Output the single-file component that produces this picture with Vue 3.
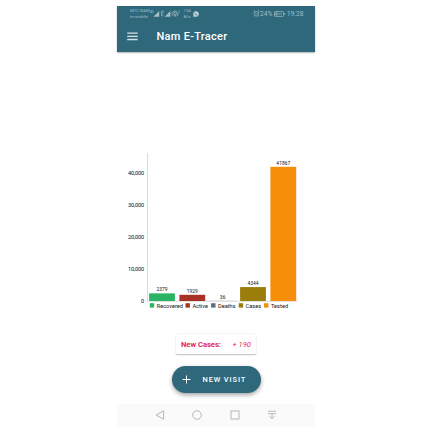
<script setup>
const base = 149
const perUnit = 32.05 / 10000
const ticks = [0, 10000, 20000, 30000, 40000]
const bars = [
  { name: 'Recovered', value: 2379, x: 32.1, color: '#28b463', legend: 32.8 },
  { name: 'Active', value: 1929, x: 62.4, color: '#a93226', legend: 68.5 },
  { name: 'Deaths', value: 36, x: 92.8, color: '#5d6d7e', legend: 94.1 },
  { name: 'Cases', value: 4344, x: 123.1, color: '#9a7d0a', legend: 121.7 },
  { name: 'Tested', value: 41867, x: 153.4, color: '#f68e09', legend: 147 }
]
const legendWidths = { Recovered: 26.2, Active: 15.5, Deaths: 17.6, Cases: 15.5, Tested: 17.3 }
const height = (v) => v * perUnit
const tickY = (v) => base - v * perUnit
const tickWidth = (v) => (v ? 16.3 : 3)
const valueWidth = (v) => (String(v).length === 2 ? 5.8 : String(v).length * 2.78)
</script>

<template>
  <main class="screen">
    <div class="phone">
      <header class="top">
        <div class="status">
          <div class="carrier"><span>MTC NAM</span><span>tn mobile</span></div>
          <svg class="signals" width="30" height="9" viewBox="0 0 30 9">
            <text x="0" y="4" font-size="3.2" textLength="3.5">4G</text>
            <path d="M9.2 2v5.7H3.4zM20.4 2v5.7h-5.7z" />
            <path class="line" d="M14.2 2.2h-2.6v4.6h2M11.6 4.3h1.8M22.9 7a3 3 0 1 1 4.4 0M24 5.8a1.5 1.5 0 1 1 2.2 0M25.1 5L24.2 7.7M25.1 5L26 7.7" />
            <text x="28.2" y="3.5" font-size="3.2">1</text>
          </svg>
          <div class="speed"><span>194</span><span>B/s</span></div>
          <svg class="chat" width="6" height="6" viewBox="0 0 6 6">
            <path d="M3 .2a2.8 2.8 0 1 1-1.3 5.3L.1 6l.5-1.6A2.8 2.8 0 0 1 3 .2z" />
            <path class="handset" d="M2 1.7c-.1 1.2 1 2.4 2.3 2.4" />
          </svg>
          <svg class="alarm" width="7" height="7" viewBox="0 0 7 7">
            <circle cx="3.5" cy="3.8" r="2.3" />
            <path d="M.5 1.7L2 .5M6.5 1.7L5 .5M2.5 3.2l1 .9 1.2-.8M1.8 5.7l-.6.8M5.2 5.7l.6.8" />
          </svg>
          <span class="percent">24%</span>
          <svg class="battery" width="12" height="6" viewBox="0 0 12 6">
            <rect x=".5" y=".6" width="9" height="4.8" rx=".7" />
            <path d="M1.7 1.8h1.4v2.4H1.7zM4 3h4M10.8 2v2" />
          </svg>
          <span class="clock">19:28</span>
        </div>
        <div class="bar">
          <svg class="menu" width="11" height="9" viewBox="0 0 11 9">
            <path d="M.2 1.1h10.5M.2 4.3h10.5M.2 7.5h10.5" />
          </svg>
          <h1>Nam E-Tracer</h1>
        </div>
      </header>

      <section class="content">
        <svg class="chart" width="198" height="162" viewBox="0 0 198 162">
          <path class="axis" d="M30.5 1V149.3H180" />
          <text
            v-for="t in ticks"
            :key="t"
            class="tick"
            x="27.2"
            :y="tickY(t) + 1.9"
            :textLength="tickWidth(t)"
            text-anchor="end"
          >{{ t.toLocaleString('en-US') }}</text>
          <g v-for="b in bars" :key="b.name">
            <rect :x="b.x" :y="base - height(b.value)" width="25.8" :height="height(b.value)" :fill="b.color" />
            <text
              class="value"
              :x="b.x + 12.9"
              :y="base - height(b.value) - 2.2"
              :textLength="valueWidth(b.value)"
              text-anchor="middle"
            >{{ b.value }}</text>
            <rect :x="b.legend" y="151.2" width="4.4" height="4.4" :fill="b.color" />
            <text class="legend" :x="b.legend + 6.9" y="155.6" :textLength="legendWidths[b.name]">{{ b.name }}</text>
          </g>
        </svg>

        <div class="card"><strong>New Cases:</strong><em>+ 190</em></div>

        <button class="visit">
          <svg width="9" height="9" viewBox="0 0 9 9"><path d="M4.5 .5v8M.5 4.5h8" /></svg>
          <span>NEW VISIT</span>
        </button>
      </section>

      <nav class="nav">
        <svg viewBox="0 0 10 10"><path d="M8.6 .8v8.4L1 5z" /></svg>
        <svg viewBox="0 0 10 10"><circle cx="5" cy="5" r="4.3" /></svg>
        <svg viewBox="0 0 10 10"><rect x="1" y="1" width="8" height="8" /></svg>
        <svg viewBox="0 0 10 10"><path d="M1 1.3h8M1 3.7h8M5 4v4.5M2.5 6.2L5 8.7 7.5 6.2" /></svg>
      </nav>
    </div>
  </main>
</template>

<style>
body {
  background: #fff;
}
</style>

<style scoped>
.screen {
  width: 432px;
  height: 432px;
  box-sizing: border-box;
  padding: 6px 0 0 117px;
  background: #fff;
  font-family: Roboto, "Liberation Sans", sans-serif;
  overflow: hidden;
}
.phone {
  width: 198px;
  height: 420px;
  display: flex;
  flex-direction: column;
}
.top {
  height: 46px;
  flex: none;
  background: #2f687b;
  box-shadow: 0 1px 1.5px rgba(0, 0, 0, 0.3);
}
.status {
  height: 15px;
  display: flex;
  align-items: center;
  padding: 0 11.5px 0 13px;
  color: #a5bfc8;
}
.carrier,
.speed {
  display: flex;
  flex-direction: column;
  font-size: 4.3px;
  line-height: 5.6px;
  white-space: nowrap;
}
.carrier {
  width: 20px;
}
.signals {
  fill: #a5bfc8;
}
.signals .line {
  fill: none;
  stroke: #a5bfc8;
  stroke-width: 0.7;
}
.speed {
  width: 7px;
  margin-left: 3.5px;
  text-align: center;
}
.chat {
  margin-left: 2.5px;
  fill: #c5d5db;
}
.chat .handset {
  fill: none;
  stroke: #2f687b;
  stroke-width: 0.9;
}
.alarm {
  margin-left: auto;
  fill: none;
  stroke: #a5bfc8;
  stroke-width: 0.7;
}
.percent {
  font-size: 6.6px;
  margin-left: 0.5px;
}
.battery {
  margin-left: 1.5px;
  fill: none;
  stroke: #a5bfc8;
  stroke-width: 0.7;
}
.clock {
  font-size: 6.7px;
  margin-left: 1px;
}
.bar {
  height: 32px;
  display: flex;
  align-items: center;
  padding-left: 10px;
}
.menu {
  margin-top: -2px;
  fill: none;
  stroke: #d3e0e4;
  stroke-width: 1.3;
}
h1 {
  margin: 0 0 0 18.5px;
  color: #fff;
  font-size: 11px;
  font-weight: 500;
  letter-spacing: 0.28px;
  line-height: 14px;
}
.content {
  flex: 1;
  display: flex;
  flex-direction: column;
  align-items: center;
  padding-top: 100px;
}
.chart {
  display: block;
  flex: none;
}
.axis {
  fill: none;
  stroke: #d2d2d2;
  stroke-width: 0.8;
}
.tick {
  font-size: 5.6px;
  fill: #111;
}
.value {
  font-size: 4.9px;
  fill: #111;
}
.legend {
  font-size: 5.6px;
  fill: #111;
}
.card {
  width: 80px;
  height: 20px;
  margin-top: 20px;
  box-sizing: border-box;
  padding: 0 5px;
  display: flex;
  align-items: center;
  justify-content: space-between;
  border-radius: 1.5px;
  background: #fff;
  box-shadow: 0 0.7px 1.3px rgba(0, 0, 0, 0.26);
  color: #e91e63;
  font-size: 7.6px;
}
.card strong {
  font-weight: 700;
}
.visit {
  width: 89px;
  height: 27px;
  margin-top: 12px;
  padding: 0 0 0 10.5px;
  display: flex;
  align-items: center;
  border: 0;
  border-radius: 14px;
  background: #2f687b;
  box-shadow: 0 2px 4px rgba(0, 0, 0, 0.36);
  color: #fff;
  font: 500 7.4px Roboto, "Liberation Sans", sans-serif;
  letter-spacing: 0.9px;
}
.visit svg {
  fill: none;
  stroke: #fff;
  stroke-width: 1;
}
.visit span {
  margin-left: 11.5px;
  white-space: nowrap;
}
.nav {
  height: 22px;
  flex: none;
  display: flex;
  align-items: center;
  gap: 27.4px;
  padding-left: 38px;
  background: #fafafa;
}
.nav svg {
  width: 10px;
  height: 10px;
  fill: none;
  stroke: #b0b0b0;
  stroke-width: 0.9;
}
</style>
